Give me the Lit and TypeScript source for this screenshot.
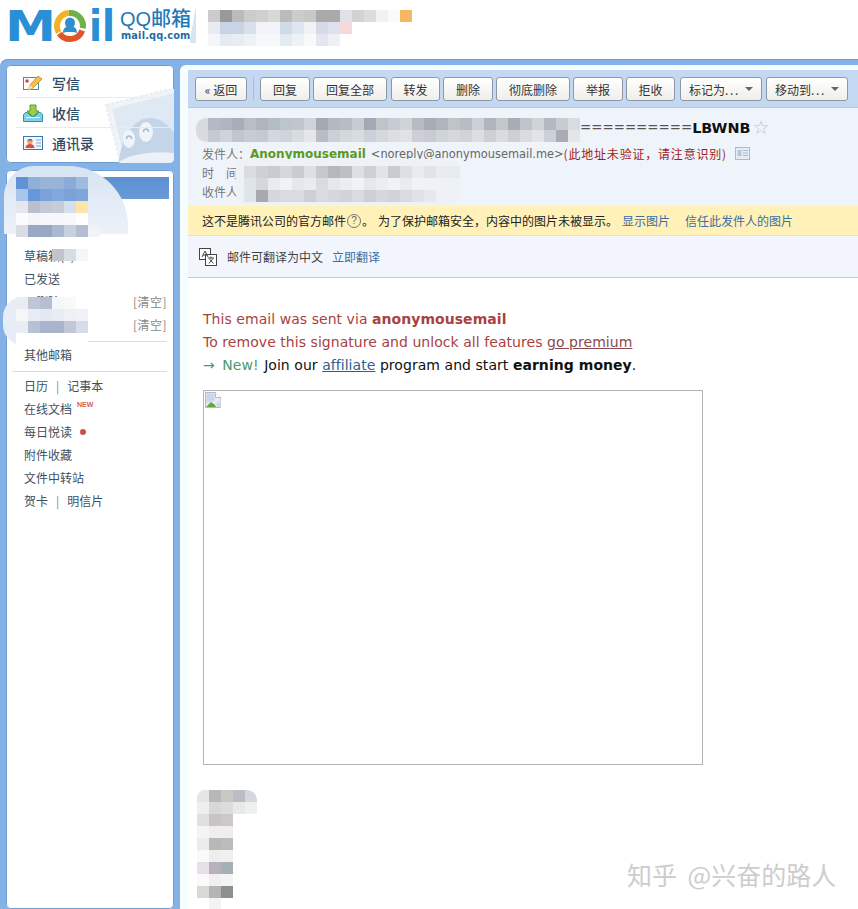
import { LitElement, html, css, svg, unsafeCSS } from "lit";
import { customElement } from "lit/decorators.js";

const CJK = unsafeCSS(`"Noto Sans CJK SC", "Liberation Sans", sans-serif`);

const M_HEAD = [
  "ccc 999 bbb ccc d0d0d0 d8d8d4 bbb ccc c8c8c4 aaa aaa dfe2ea d0d4d0 dcdcdc f2f2ee fafafa f5b860",
  "e8ecf2 c8d4e6 c8d4e6 d8e0ec f2f3f6 f2f4f8 d0dbe8 e0e6f0 f0f2f6 d4dae8 dfe2ee f6d8d8 fff fff fff fff fff",
  "f4f6fa e4eaf2 e8edf5 eef1f6 f6f7fa f6f7fa e4eaf2 eef1f6 f8f9fb e2e6f0 eef0f6 fff fff fff fff fff fff",
];
const M_SUBJ = [
  "b4bac4 b0b6c0 a8aeb8 b8bec6 b0b4bc b4bcc4 bcc4cc c0c6cc d0d4da a4a8b0 b4b8c0 b8bcc4 c8ccd2 a4a8b4 c0c4ca c8ccd2 d0d4d8 b8bcc2 a8acb4 b0b4bc c0c4c8 b8bcc4 cccfd4 b0b4bc c4c8cc a8acb4 c0c4c8 d0d4d8 b4b8c0 c8ccd0 d8dce0",
  "c4cad2 d0d4da c0c6ce c8ccd4 c4cad2 d4d8dc d0d4da d8dce0 e4e6ea b8bcc4 ccd0d6 d4d8dc d8dce0 ccd0d8 d4d8dc dcdfe2 e0e2e6 ccd0d6 c8ccd2 d0d4d8 d4d8dc d0d4d8 dcdfe2 ccd0d6 d8dce0 ccd0d6 d8dce0 e0e4e6 ccd0d6 a8acb4 e4e6ea",
];
const M_SENDER = [
  "d8dce0 d0d0d4 c8ccd0 d4d8dc c8ccd0 dce0e4 c8c8cc b4b8bc bcc0c4 dce0e4 ccd0d4 e0e4e8 c8ccd0 dce0e4 e8ecf0 e0e4e8 e8ecf0 e8ecf0",
  "dfe4ea d4d8dc e8ecf0 f0f2f6 e4e8ec e8ecf0 d8dce0 e4e8ec eaeef2 f0f2f6 e4e8ec eaeef2 f0f2f6 e8ecf0 f0f2f6 f0f2f6 - -",
  "dfe4ea a8a8b0 d4d8dc d8dce0 d8dce0 ccd0d4 d8dce0 d4d8dc d0d4d8 d8dce0 ccd0d4 d4d8dc d0d4d8 d8dce0 dfe2e8 e6e8ec - -",
];
const M_SIDE1 = [
  "5f93d6 8fb0dc 9ab4d8 98b2d8 8aaad8 a0bbe0",
  "a8c4e8 6498d8 7aa2d8 80a8dc 7aa2d8 7fa6dc",
  "e4e8ee b8c0d0 c4c8d4 c8ccd8 d8dfec fbe6a8",
  "fafbfc f4f5f8 f6f7fa f6f7fa f8f8fa fff",
  "d8dce4 98a8c4 98a8c4 aab8d0 c8d0e0 b4bcd0 f0f4f8",
  "fff fff fff fff fff fff",
  "- - - c0c4cc d8dce4 f6f6f8",
];
const M_SIDE2 = [
  "e8edf4 c0c6d6 b4bfd4 f4f6fa f8f9fb fff",
  "f4f6fa e8ecf4 e4e8f0 e8ecf4 eef0f6 f0f2f8",
  "e8ecf4 b8c0d4 aab4cc aab4cc c0c8d8 d8dce8",
  "fff fff fff fff fff fff",
];
const M_BOTTOM = [
  "e6e6e6 b8b8b8 c8c9c4 bcbcc4 d4d8de",
  "efefef d8d8d8 dcdcdc e8eaea eef0f0",
  "e0e0e0 c8c4c4 ccc8c8",
  "f4f4f4 eee eee",
  "ececec b8b8b8 bcbcba",
  "fafafa eee f0f0f0",
  "e8e0e8 b8b0bc a4b0b4",
  "fafafa f0f0f0 f4f4f4",
  "d8d8d4 b4b4b4 8c9090",
  "fff f4f4f4 fff",
];

const mosaic = (cls: string, rows: string[]) => html`<div class="mosaic ${cls}" aria-hidden="true">
  ${rows.map(
    (r) => html`<div class="mrow">
      ${r.split(" ").map((c) =>
        c === "-"
          ? html`<i class="cell"></i>`
          : html`<i class="cell" style="background:#${c}"></i>`
      )}
    </div>`
  )}
</div>`;

const logo = svg`
  <text x="5" y="41" class="lg-t" font-size="42" textLength="51" lengthAdjust="spacingAndGlyphs">M</text>
  <path d="M68.9 13.05A13 13 0 0 1 82.8 28.26" fill="none" stroke="#6fb04a" stroke-width="6"/>
  <path d="M82.2 30.4A13 13 0 0 1 59.35 33.46" fill="none" stroke="#e0562a" stroke-width="6"/>
  <path d="M58.74 32.5A13 13 0 0 1 68.87 13.05" fill="none" stroke="#f3b224" stroke-width="6"/>
  <ellipse cx="70" cy="23" rx="5" ry="5.5" fill="#2f8fd2"/>
  <path d="M63 33c0-5 3-7 7-7s7 2 7 7c-2-1-3-1-7-1s-5 0-7 1z" fill="#2f8fd2"/>
  <text x="89" y="41" class="lg-t" font-size="42" textLength="26" lengthAdjust="spacingAndGlyphs">il</text>`;

const icoPencil = html`<svg class="nav-ico" viewBox="0 0 20 16">
  <rect x="0.5" y="2.5" width="15" height="12" fill="#fff" stroke="#3d8fb0"/>
  <rect x="2.5" y="4.5" width="3" height="3" fill="#c8453c"/>
  <path d="M5 15l2-5L15 1l4 3-9 9z" fill="#f5c04a" stroke="#b9802a" stroke-width=".8"/>
  <path d="M5 15l2-5 3 3z" fill="#f6e4c0"/>
</svg>`;
const icoInbox = html`<svg class="nav-ico" viewBox="0 0 20 18">
  <path d="M7 1h6v6h3l-6 6-6-6h3z" fill="#9ccc4c" stroke="#5f9a2a"/>
  <path d="M.5 10.5l2-2h2l4 4h3l4-4h2l2 2v7H.5z" fill="#7fd0e0" stroke="#2a93ad"/>
  <rect x="3" y="13" width="14" height="1" fill="#e8f8fc"/>
</svg>`;
const icoCard = html`<svg class="nav-ico" viewBox="0 0 20 16">
  <rect x=".5" y="1.5" width="19" height="13" fill="#eef5fb" stroke="#3a7ab0"/>
  <circle cx="7" cy="6.5" r="2.6" fill="#e8a070"/>
  <path d="M4.3 6c.4-2.5 4.700-3 5.400 0-2-1-3.500-1-5.400 0z" fill="#8a4a2a"/>
  <path d="M2.500 13c.3-3 2-4 4.500-4s4.200 1 4.500 4z" fill="#d8503c"/>
  <path d="M13 5h5M13 8h5M13 11h5" stroke="#8aa8c4"/>
</svg>`;
const stamp = html`<svg class="stamp" viewBox="0 0 80 80">
  <g transform="rotate(-14 6 16)">
    <rect x="6" y="16" width="78" height="78" fill="#f0f4f9" stroke="#e6edf5" stroke-width="2" stroke-dasharray="3 2"/>
    <rect x="11" y="21" width="68" height="68" fill="#dfe9f4"/>
  </g>
  <path d="M18 84C18 56 30 29 50 29s34 24 34 55z" fill="#c4d5e8"/>
  <ellipse cx="29" cy="50" rx="6" ry="9" fill="#eff4f9"/>
  <ellipse cx="46" cy="43" rx="7" ry="10" fill="#eff4f9"/>
  <path d="M26.500 50a2.500 3 0 0 1 5 0M43.500 43a2.500 3 0 0 1 5 0" stroke="#a4bad0" stroke-width="1.500" fill="none"/>
  <path d="M20 72c10-6 34-12 60-7v19H20z" fill="#ebf1f7"/>
</svg>`;
const icoMiniCard = html`<svg class="mini-card" viewBox="0 0 15 13">
  <rect x=".5" y=".5" width="14" height="12" fill="#e4ecf5" stroke="#a8bcd0"/>
  <rect x="2.500" y="3" width="4" height="6" fill="#b4c6d8"/>
  <path d="M8 3.500h5M8 6h5M8 8.500h5" stroke="#a8bcd0"/>
</svg>`;
const icoTrans = html`<svg class="trans-ico" viewBox="0 0 18 18">
  <rect x=".5" y=".5" width="11" height="11" fill="#fff" stroke="#444"/>
  <rect x="6.500" y="6.500" width="11" height="11" fill="#fff" stroke="#444"/>
  <path d="M3 9l3-6 3 6M4 7h4" fill="none" stroke="#444"/>
  <path d="M9 10h6M12 8.500V10M10 15.500l4-5M10.500 11l4 4.500" fill="none" stroke="#444"/>
</svg>`;
const icoBroken = html`<svg class="broken" viewBox="0 0 16 16">
  <path d="M.5.5h10l5 5v10H.5z" fill="#e4ebf6" stroke="#b4bac8"/>
  <path d="M1.500 1.500h8v7l-3 1-5 1z" fill="#c8d6ee"/>
  <path d="M1 15l5-5 4 3 1 2z" fill="#5fa83c"/>
  <path d="M10.500.5v5h5" fill="#fff" stroke="#b4bac8"/>
  <path d="M16 7l-5 5 1 3h4z" fill="#d4d8e0"/>
</svg>`;

@customElement("app-root")
export class AppRoot extends LitElement {
  static styles = css`
    :host { display: block; width: 858px; height: 909px; overflow: hidden; position: relative; background: #fff; font: 12px ${CJK}; color: #333; }
    .header { height: 59px; display: flex; align-items: flex-start; box-sizing: border-box; }
    .logo-svg { width: 120px; height: 54px; flex: none; }
    .lg-t { font-family: "DejaVu Sans", sans-serif; font-weight: 700; fill: #2b8fd6; }
    .brand { margin-top: 8px; display: flex; flex-direction: column; align-items: flex-start; background: linear-gradient(100deg, transparent 92%, #d4e6f4 92%); width: 76px; height: 34px; padding-top: 1px; }
    .brand b { font-weight: 500; font-size: 20px; line-height: 21px; color: #1f78b8; white-space: nowrap; font-family: "Liberation Sans", "Noto Sans CJK SC", sans-serif; }
    .brand small { font: 700 9.8px/11px "DejaVu Sans", sans-serif; color: #1f6ca8; letter-spacing: .15px; margin-left: 1px; }

    .frame { display: flex; gap: 6px; height: 850px; padding: 6px 0 0 6px; box-sizing: border-box; background: #84b2e6; border-top-left-radius: 8px; box-shadow: inset 0 1px 0 #6f9fd6; }
    .side { width: 168px; flex: none; display: flex; flex-direction: column; gap: 7px; }
    .panel { background: #fff; border-radius: 5px; box-shadow: inset 0 0 0 1px #6e9dd4; position: relative; overflow: hidden; }
    .p1 { height: 98px; padding: 3px 4px 0 10px; box-sizing: border-box; }
    .stamp { position: absolute; right: -6px; bottom: -6px; width: 80px; height: 80px; }
    .nav { display: flex; align-items: center; gap: 9px; height: 30px; padding-left: 7px; font-size: 14px; font-weight: 500; color: #2c4a68; border-bottom: 1px solid #e6ecf3; box-sizing: border-box; position: relative; z-index: 1; }
    .nav:last-of-type { border-bottom: 0; }
    .nav-ico { width: 20px; height: 18px; flex: none; }
    .p2 { flex: 1; padding: 7px 6px 0 10px; box-sizing: border-box; }
    .cur { height: 22px; margin-bottom: -1px; background: linear-gradient(#5b90d2, #6a9bd8); color: #fff; line-height: 22px; padding-left: 8px; margin-right: -1px; }
    .it { height: 23px; line-height: 23px; padding-left: 8px; color: #40505f; display: flex; justify-content: space-between; white-space: nowrap; }
    .it .clear { color: #888; margin-right: 1px; letter-spacing: .5px; }
    .pipe { color: #888; margin: 0 8px; }
    .new { color: #e05a5a; font: 700 7px/1 "Liberation Sans", sans-serif; margin-left: 5px; position: relative; top: 4px; }
    .dot { width: 6px; height: 6px; border-radius: 50%; background: #c8504f; margin: 9px 0 0 8px; }
    .left { display: flex; }
    .rule { border-top: 1px solid #d4dbe4; margin: 5px 1px 1px -4px; }
    .rule.r2 { margin-top: 5px; margin-bottom: 2px; }

    .main { flex: 1; background: #f6fdff; border-top-left-radius: 6px; padding: 5px 0 0 8px; min-width: 0; }
    .toolbar { height: 38px; background: #c4d9f1; display: flex; align-items: flex-start; padding: 7px 0 0 7px; box-sizing: border-box; border-bottom: 1px solid #b4c6dc; }
    .btn { height: 24px; box-sizing: border-box; border: 1px solid #8c98a8; border-radius: 3px; background: linear-gradient(#fff, #efeeea); display: flex; align-items: center; justify-content: center; color: #333; white-space: nowrap; flex: none; margin-right: 3px; }
    .w51 { width: 52px; } .w50 { width: 50px; } .w74 { width: 74px; } .w49 { width: 49px; }
    .w83 { width: 82px; margin-left: 1px; }
    .w83.first { margin-left: 2px; }
    .dots { letter-spacing: 1.6px; }
    .sep { width: 1px; height: 23px; background: #a9bdd4; margin: 0 6px 0 3px; }
    .gapl { margin-right: 4px; }
    .caret { width: 0; height: 0; border: 4px solid transparent; border-top: 4px solid #666; border-bottom: 0; margin-left: 5px; }

    .info { height: 98px; background: #eff4fb; padding: 0 0 0 14px; box-sizing: border-box; }
    .subject { height: 36px; display: flex; align-items: center; padding-left: 378px; font: 700 14.4px "DejaVu Sans", sans-serif; color: #111; padding-top: 3px; box-sizing: border-box; white-space: nowrap; }
    .subject .eq { font-weight: 400; font-size: 13.4px; color: #555; }
    .subject .star { color: #b8c4d2; font-size: 19px; font-weight: 400; line-height: 1; margin-left: 2px; }
    .row { height: 19px; line-height: 19px; color: #777; display: flex; align-items: center; white-space: nowrap; }
    .name { font: 700 12px "DejaVu Sans", sans-serif; color: #5a9a1e; margin: 0 5px 0 0; }
    .addr { font: 11.4px "DejaVu Sans", sans-serif; color: #666; }
    .warn { color: #a01c20; letter-spacing: .8px; }
    .mini-card { width: 15px; height: 13px; margin-left: 8px; }
    .lab2 { letter-spacing: 12px; }

    .yellow { height: 30px; background: #fff1b8; border-bottom: 1px solid #e6dfc0; box-sizing: border-box; padding-left: 14px; display: flex; align-items: center; color: #222; white-space: nowrap; }
    .q { width: 14px; height: 14px; border-radius: 50%; border: 1px solid #777; box-sizing: border-box; font: 10px/12px "Liberation Sans", sans-serif; text-align: center; color: #666; margin-left: 1px; flex: none; }
    .lnk { color: #3a6ea5; }
    .y-a { margin-left: 1px; } .y-b { margin-left: 4px; }
    .y-c { margin-left: 4px; } .y-d { margin-left: 15px; }
    .trans { height: 42px; background: #f2f6fc; border-bottom: 1px solid #c4ccd6; box-sizing: border-box; padding-left: 11px; display: flex; align-items: center; color: #444; white-space: nowrap; }
    .trans-ico { width: 18px; height: 18px; margin-right: 10px; }
    .trans .lnk { margin-left: 9px; }

    .body { background: #fff; height: 632px; padding: 30px 0 0 15px; box-sizing: border-box; font: 14px/23px "DejaVu Sans", sans-serif; letter-spacing: .05px; }
    .red { color: #a8423f; }
    .red u { color: #8a4a50; }
    .l3 { color: #111; }
    .grn { color: #4a9a6e; word-spacing: 3px; margin-right: 1px; }
    .aff { color: #2a5f8f; text-decoration: underline; }
    .imgbox { width: 500px; height: 375px; border: 1px solid #b4b4b4; box-sizing: border-box; margin-top: 13px; padding: 1px; }
    .broken { width: 16px; height: 16px; display: block; }

    .mosaic { position: absolute; }
    .mrow { display: flex; }
    .cell { display: block; width: 12px; height: 12px; flex: none; }
    .m-head { left: 208px; top: 10px; }
    .m-subj { left: 196px; top: 118px; padding-left: 12px; background: #d8dadf; border-radius: 12px 14px 14px 12px; }
    .m-send { left: 236px; top: 159px; padding: 7px 0 3px 8px; background: #eef1f5; border-radius: 10px 14px 14px 10px; }
    .m-side1 { left: 4px; top: 166px; padding: 11px 28px 0 12px; background: linear-gradient(#d8e4f3, #edf2f9) no-repeat; background-size: 100% 68px; border-radius: 30px 60px 0 30px; }
    .m-side2 { left: 3px; top: 297px; padding-left: 13px; background: #e6edf6; border-radius: 20px 12px 8px 20px; }
    .m-bot { left: 197px; top: 790px; border-radius: 8px 10px 0 8px; overflow: hidden; }
    .mark { position: absolute; left: 627px; top: 856px; font-size: 25px; line-height: 36px; color: #cdcdcd; white-space: nowrap; word-spacing: 5px; }
  `;

  render() {
    return html`
      <div class="header">
        <svg class="logo-svg" viewBox="0 0 120 54">${logo}</svg>
        <div class="brand"><b>QQ邮箱</b><small>mail.qq.com</small></div>
      </div>
      <div class="frame">
        <aside class="side">
          <div class="panel p1">
            ${stamp}
            <div class="nav">${icoPencil}写信</div>
            <div class="nav">${icoInbox}收信</div>
            <div class="nav">${icoCard}通讯录</div>
          </div>
          <div class="panel p2">
            <div class="cur">收件箱</div>
            <div class="it">星标邮件</div>
            <div class="it">群邮件</div>
            <div class="it">草稿箱(1)</div>
            <div class="it">已发送</div>
            <div class="it"><span>已删除</span><span class="clear">[清空]</span></div>
            <div class="it"><span>垃圾箱</span><span class="clear">[清空]</span></div>
            <div class="rule"></div>
            <div class="it">其他邮箱</div>
            <div class="rule r2"></div>
            <div class="it"><span class="left">日历<span class="pipe">|</span>记事本</span></div>
            <div class="it"><span class="left">在线文档<span class="new">NEW</span></span></div>
            <div class="it"><span class="left">每日悦读<i class="dot"></i></span></div>
            <div class="it">附件收藏</div>
            <div class="it">文件中转站</div>
            <div class="it"><span class="left">贺卡<span class="pipe">|</span>明信片</span></div>
          </div>
        </aside>
        <main class="main">
          <div class="toolbar">
            <div class="btn w51">« 返回</div><i class="sep"></i>
            <div class="btn w50">回复</div>
            <div class="btn w74 gapl">回复全部</div>
            <div class="btn w49">转发</div>
            <div class="btn w50">删除</div>
            <div class="btn w74">彻底删除</div>
            <div class="btn w50">举报</div>
            <div class="btn w49">拒收</div>
            <div class="btn w83 first">标记为<span class="dots">...</span><i class="caret"></i></div>
            <div class="btn w83">移动到<span class="dots">...</span><i class="caret"></i></div>
          </div>
          <div class="info">
            <div class="subject"><span class="eq">==========</span>LBWNB<span class="star">☆</span></div>
            <div class="row">发件人：<span class="name">Anonymousemail</span><span class="addr">&lt;noreply@anonymousemail.me&gt;</span><span class="warn">(此地址未验证，请注意识别)</span>${icoMiniCard}</div>
            <div class="row"><span class="lab2">时间</span></div>
            <div class="row">收件人</div>
          </div>
          <div class="yellow">这不是腾讯公司的官方邮件<span class="q">?</span><span class="y-a">。</span><span class="y-b">为了保护邮箱安全，内容中的图片未被显示。</span><span class="lnk y-c">显示图片</span><span class="lnk y-d">信任此发件人的图片</span></div>
          <div class="trans">${icoTrans}邮件可翻译为中文<span class="lnk">立即翻译</span></div>
          <div class="body">
            <div class="red">This email was sent via <b>anonymousemail</b></div>
            <div class="red">To remove this signature and unlock all features <u>go premium</u></div>
            <div class="l3"><span class="grn">→ New!</span> Join our <span class="aff">affiliate</span> program and start <b>earning money</b>.</div>
            <div class="imgbox">${icoBroken}</div>
          </div>
        </main>
      </div>
      ${mosaic("m-head", M_HEAD)}
      ${mosaic("m-subj", M_SUBJ)}
      ${mosaic("m-send", M_SENDER)}
      ${mosaic("m-side1", M_SIDE1)}
      ${mosaic("m-side2", M_SIDE2)}
      ${mosaic("m-bot", M_BOTTOM)}
      <div class="mark">知乎 @兴奋的路人</div>
    `;
  }
}
